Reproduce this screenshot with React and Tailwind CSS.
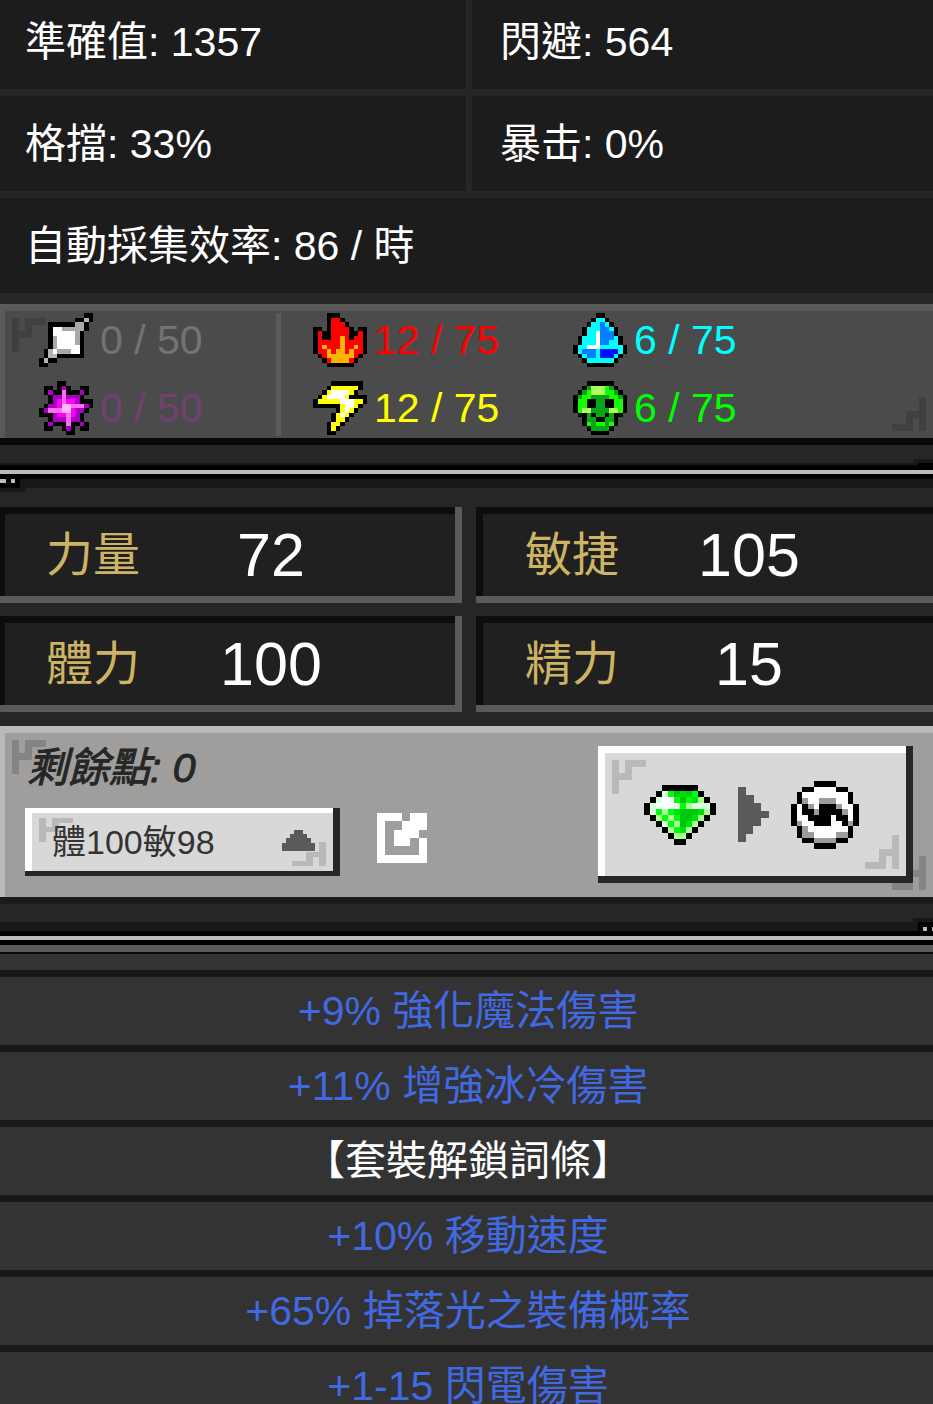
import React from "react";

const SPIRIT = {
  colors: { K: "#000000", W: "#ffffff", G: "#aaa9a9", L: "#b4b4b4" },
  rows: [
    "..........KK",
    "........KKLK",
    "..KKKKKKGGK.",
    "..KWWGGGGGK.",
    "..KWWWWWGK..",
    "..KGWWWWGK..",
    "..KGWWWWGK..",
    "..KGWWWWWK..",
    ".KLWGGGWWK..",
    ".KLLKKKKKK..",
    "KLKK........",
    "KK..........",
  ],
};

const ARCANE = {
  colors: { K: "#000000", P: "#a800c0", M: "#ff00f0", H: "#ff6cf4", L: "#ffb8fa" },
  rows: [
    "....KK......",
    ".KK.KPK..KK.",
    ".KPKKHKKKPK.",
    "..KPPHPPPK..",
    "..KPMHMMPKKK",
    ".KPPMLLHHHPK",
    "KPHHHLLMPPK.",
    "KKKPMMHMPK..",
    "..KPPPHPPK..",
    ".KPKKKHKKPK.",
    ".KK..KPK.KK.",
    "......KK....",
  ],
};

const FIRE = {
  colors: { K: "#000000", R: "#ff0000", Y: "#ffb400" },
  rows: [
    "...KKK......",
    "...KRRK.....",
    "...KRRRK....",
    "KK.KRRRRK.KK",
    "KRKKRRRRKKRK",
    "KRKKRRYRKRRK",
    "KRRRRRYRRRRK",
    "KRYRRRYRRYRK",
    "KRRYRYYRYRRK",
    ".KRYYYYYYRK.",
    "..KRYYYYRK..",
    "...KKKKKK...",
  ],
};

const BOLT = {
  colors: { K: "#000000", Y: "#ffff00", W: "#ffffff" },
  rows: [
    "....KKKKKKK.",
    "...KYYYYYYK.",
    "..KYWWWWYK..",
    ".KYWWWWYKKKK",
    "KYYYYYWWWYYK",
    "KKKKKKYWWYK.",
    ".....KYWYK..",
    "....KYWYK...",
    "....KYYK....",
    "...KYYK.....",
    "...KYK......",
    "...KK.......",
  ],
};

const DROP = {
  colors: { K: "#000000", C: "#00ffff", B: "#0080ff", D: "#0010ff", W: "#ffffff" },
  rows: [
    ".....KK.....",
    "....KCCK....",
    "...KCCBCK...",
    "..KCCCBBCK..",
    "..KCCWBBBK..",
    ".KCCCWBBBCK.",
    ".KCCCWBBCCK.",
    "KCCWWWCCCCCK",
    "KCBBBCDDDDCK",
    ".KCBBCDDDCK.",
    "..KCCCCCCK..",
    "...KKKKKK...",
  ],
};

const SKULL = {
  colors: { K: "#000000", E: "#16ff00", D: "#05a814", L: "#b0ff60" },
  rows: [
    "...KKKKKK...",
    "..KDLLLEDK..",
    ".KDELLLEEDK.",
    "KDEEDDDDEEDK",
    "KEEKKDDKKEEK",
    "KEEKKDDKKEEK",
    "KELLDDDDLLEK",
    ".KKDKDDKDKK.",
    "..KDDKKDDK..",
    "..KEDEEDEK..",
    "...KDDDDK...",
    "....KKKK....",
  ],
};

const GEM = {
  colors: { K: "#000000", E: "#00ff0c", M: "#00e00c", D: "#00c80c", L: "#aaff96", P: "#dcffdc", W: "#ffffff" },
  rows: [
    "...KKKKKK...",
    "..KPEDMDEK..",
    ".KPWWEDEMLK.",
    "KPWWWPELPPPK",
    "KPELEMDDDMLK",
    ".KLELEDDMLK.",
    "..KPELDMLK..",
    "...KLEMLK...",
    "....KLLK....",
    ".....KK.....",
  ],
};

const ORB = {
  colors: { K: "#000000", W: "#ffffff", G: "#9c9c9c" },
  rows: [
    "....KKKK....",
    "..KKWWWWKK..",
    ".KWWWWWWWWK.",
    ".KGWWGGGWWK.",
    "KWKGWKKKGWWK",
    "KWKKGKKKKGWK",
    "KWWKKKKWKKWK",
    "KGWWKKKWWKGK",
    ".KGWWWWWWWK.",
    ".KGGWWWWGGK.",
    "..KKGGGGKK..",
    "....KKKK....",
  ],
};

const RESPEC = {
  colors: { W: "#ffffff" },
  rows: ["WWW.WW", "W..WWW", "W.WWW.", "W.WW.W", "W....W", "WWWWWW"],
};

function Sprite({ art, className }) {
  const width = art.rows[0].length;
  return (
    <svg
      viewBox={`0 0 ${width} ${art.rows.length}`}
      shapeRendering="crispEdges"
      aria-hidden="true"
      className={`shrink-0 ${className}`}
    >
      {art.rows.flatMap((row, y) =>
        [...row].map((c, x) =>
          c === "." ? null : <rect key={`${x}-${y}`} x={x} y={y} width="1" height="1" fill={art.colors[c]} />
        )
      )}
    </svg>
  );
}

function Corner({ className }) {
  return (
    <svg
      viewBox="0 0 34 34"
      preserveAspectRatio="none"
      shapeRendering="crispEdges"
      aria-hidden="true"
      className={`pointer-events-none absolute ${className}`}
    >
      <path fill="currentColor" d="M0 0H7V13H13V0H34V7H20V20H7V34H0Z" />
    </svg>
  );
}

function Attribute({ label, value, wide }) {
  return (
    <div className={`flex h-[95px] items-center bg-[#1c1c1c] ${wide ? "col-span-2" : ""} pl-[25px] even:pl-7`}>
      {label}: {value}
    </div>
  );
}

function Resistance({ art, value, className }) {
  return (
    <div className={`flex h-[54px] items-center gap-[7px] ${className}`}>
      <Sprite art={art} className="h-[54px] w-[54px]" />
      <span>{value}</span>
    </div>
  );
}

function Stat({ label, value }) {
  return (
    <div className="flex h-24 items-center bg-[#202020] pl-[49px] pr-[54px] odd:pl-[46px] odd:pr-[60px] odd:shadow-[inset_0_-7px_#5a5a5a,inset_-7px_0_#5a5a5a,inset_0_7px_#0d0d0d,inset_5px_0_#0d0d0d] even:shadow-[inset_0_-7px_#5a5a5a,inset_0_7px_#0d0d0d,inset_7px_0_#0d0d0d]">
      <span className="text-[47px] leading-[56px] text-[#cdb464]">{label}</span>
      <span className="flex-1 text-center text-[61px] leading-[70px]">{value}</span>
    </div>
  );
}

function Rail() {
  return (
    <>
      <div className="h-[5px] bg-black" />
      <div className="h-1 bg-[#bbbbb9]" />
      <div className="h-[5px] bg-black" />
    </>
  );
}

const MODS = [
  { text: "+9% 強化魔法傷害" },
  { text: "+11% 增強冰冷傷害" },
  { text: "【套裝解鎖詞條】", title: true },
  { text: "+10% 移動速度" },
  { text: "+65% 掉落光之裝備概率" },
  { text: "+1-15 閃電傷害" },
];

export default function App() {
  return (
    <main className="h-screen overflow-hidden bg-[#262626] font-['Liberation_Sans','Noto_Sans_CJK_TC',sans-serif] text-[41px] leading-[60px] text-white">
      <section className="-mt-[6px] grid grid-cols-[466fr_461fr] gap-x-[6px] gap-y-[7px] pb-[11px]">
        <Attribute label="準確值" value="1357" />
        <Attribute label="閃避" value="564" />
        <Attribute label="格擋" value="33%" />
        <Attribute label="暴击" value="0%" />
        <Attribute label="自動採集效率" value="86 / 時" wide />
      </section>

      <section className="relative flex h-[141px] bg-[#4b4b4b] pl-[5px] pt-[9px] shadow-[inset_0_-7px_#080808,inset_0_7px_#5a5a5a,inset_5px_0_#5a5a5a]">
        <Corner className="left-3 top-[14px] h-[34px] w-[34px] text-[#404040]" />
        <Corner className="bottom-[14px] right-[7px] h-[34px] w-[34px] rotate-180 text-[#404040]" />
        <div className="relative flex w-[276px] flex-col gap-[14px] pl-[34px]">
          <Resistance art={SPIRIT} value="0 / 50" className="text-[#737373]" />
          <Resistance art={ARCANE} value="0 / 50" className="text-[#71416f]" />
          <div className="absolute right-0 top-0 h-[123px] w-[5px] bg-[#5a5a5a]" />
        </div>
        <div className="grid auto-rows-min grid-cols-[260px_auto] gap-y-[14px] pl-8">
          <Resistance art={FIRE} value="12 / 75" className="text-[#ff0000]" />
          <Resistance art={DROP} value="6 / 75" className="text-[#00ffff]" />
          <Resistance art={BOLT} value="12 / 75" className="text-[#ffff00]" />
          <Resistance art={SKULL} value="6 / 75" className="text-[#00ff00]" />
        </div>
      </section>

      <div className="relative pt-[18px]">
        <div className="h-[2px] bg-[#181818]" />
        <Rail />
        <div className="h-[9px] bg-[#181818]" />
        <div className="h-[19px]" />
        <svg viewBox="0 0 25 13" shapeRendering="crispEdges" aria-hidden="true" className="absolute left-0 top-[34px] h-[13px] w-[25px]">
          <path fill="#181818" d="M0 0H25V13H0Z" />
          <path fill="#000000" d="M0 0H20V9H0Z" />
          <path fill="#bbbbb9" d="M0 0H6V4H0ZM11 0H15V4H11Z" />
        </svg>
        <svg viewBox="0 0 20 6" shapeRendering="crispEdges" aria-hidden="true" className="absolute right-0 top-[14px] h-[6px] w-5">
          <path fill="#181818" d="M0 0H20V6H0Z" />
          <path fill="#000000" d="M5 4H20V6H5Z" />
        </svg>
      </div>

      <section className="grid grid-cols-[462fr_457fr] gap-x-[14px] gap-y-[13px] pb-[14px]">
        <Stat label="力量" value="72" />
        <Stat label="敏捷" value="105" />
        <Stat label="體力" value="100" />
        <Stat label="精力" value="15" />
      </section>

      <section className="relative flex h-[178px] items-start justify-between bg-[#9f9e9c] pl-[25px] pr-5 pt-5 shadow-[inset_0_-7px_#1a1a1a,inset_0_7px_#bbbab8,inset_5px_0_#bbbab8]">
        <Corner className="left-3 top-[14px] h-[34px] w-[34px] text-[#858484]" />
        <Corner className="bottom-[14px] right-[7px] h-[34px] w-[34px] rotate-180 text-[#858484]" />
        <div className="relative">
          <h2 className="h-[62px] pl-[2px] italic leading-[44px] text-[#262626] [-webkit-text-stroke:1px_#262626]">
            剩餘點: 0
          </h2>
          <div className="flex items-center gap-[37px]">
            <div className="relative h-[68px] w-[315px] bg-[#d8d8d8] px-[7px] py-[5px] shadow-[inset_0_-5px_#262626,inset_-7px_0_#262626,inset_0_5px_#ffffff,inset_7px_0_#ffffff]">
              <Corner className="left-[14px] top-[10px] h-6 w-[34px] text-[#b9b9b9]" />
              <Corner className="bottom-[10px] right-[14px] h-6 w-[34px] rotate-180 text-[#b9b9b9]" />
              <select
                aria-label="配點方案"
                className="relative block h-full w-full cursor-pointer appearance-none bg-transparent pl-5 pr-14 text-[34px] leading-[50px] text-[#333333] outline-none"
              >
                <option>體100敏98</option>
              </select>
              <svg viewBox="0 0 33 21" shapeRendering="crispEdges" aria-hidden="true" className="pointer-events-none absolute right-[25px] top-[22px] h-[21px] w-[33px]">
                <path fill="#5a5a5a" d="M12 0H21V4H25V8H29V13H33V21H0V13H4V8H8V4H12Z" />
              </svg>
            </div>
            <button type="button" aria-label="開啟" className="-mt-2 cursor-pointer">
              <Sprite art={RESPEC} className="h-[50px] w-[50px]" />
            </button>
          </div>
        </div>
        <button
          type="button"
          aria-label="轉換"
          className="relative flex h-[137px] w-[315px] cursor-pointer items-center gap-[22px] bg-[#d8d8d8] pl-[46px] shadow-[inset_0_-7px_#262626,inset_-7px_0_#262626,inset_0_7px_#ffffff,inset_7px_0_#ffffff]"
        >
          <Corner className="left-[14px] top-[14px] h-[34px] w-[34px] text-[#b9b9b9]" />
          <Corner className="bottom-[14px] right-[14px] h-[34px] w-[34px] rotate-180 text-[#b9b9b9]" />
          <Sprite art={GEM} className="h-[60px] w-[72px]" />
          <svg viewBox="0 0 31 55" shapeRendering="crispEdges" aria-hidden="true" className="h-[55px] w-[31px]">
            <path fill="#5a5a5a" d="M0 0H8V8H16V16H23V24H31V31H23V39H15V47H8V55H0Z" />
          </svg>
          <Sprite art={ORB} className="h-[68px] w-[68px]" />
        </button>
      </section>

      <div className="relative pt-[18px]">
        <div className="h-[9px] bg-[#181818]" />
        <Rail />
        <svg viewBox="0 0 20 13" shapeRendering="crispEdges" aria-hidden="true" className="absolute right-0 top-[14px] h-[13px] w-5">
          <path fill="#181818" d="M0 0H20V13H0Z" />
          <path fill="#000000" d="M5 4H20V13H5Z" />
          <path fill="#bbbbb9" d="M10 9H14V13H10ZM19 9H20V13H19Z" />
        </svg>
      </div>

      <section className="border-t-[7px] border-[#5a5a5a] bg-[#333333]">
        <div className="h-[18px] border-t-2 border-[#080808]" />
        <ul>
          {MODS.map((mod) => (
            <li
              key={mod.text}
              className={`h-[75px] border-t-[7px] border-[#181818] pl-[3px] text-center leading-[68px] ${mod.title ? "text-white" : "text-[#4169e1]"}`}
            >
              {mod.text}
            </li>
          ))}
        </ul>
      </section>
    </main>
  );
}
